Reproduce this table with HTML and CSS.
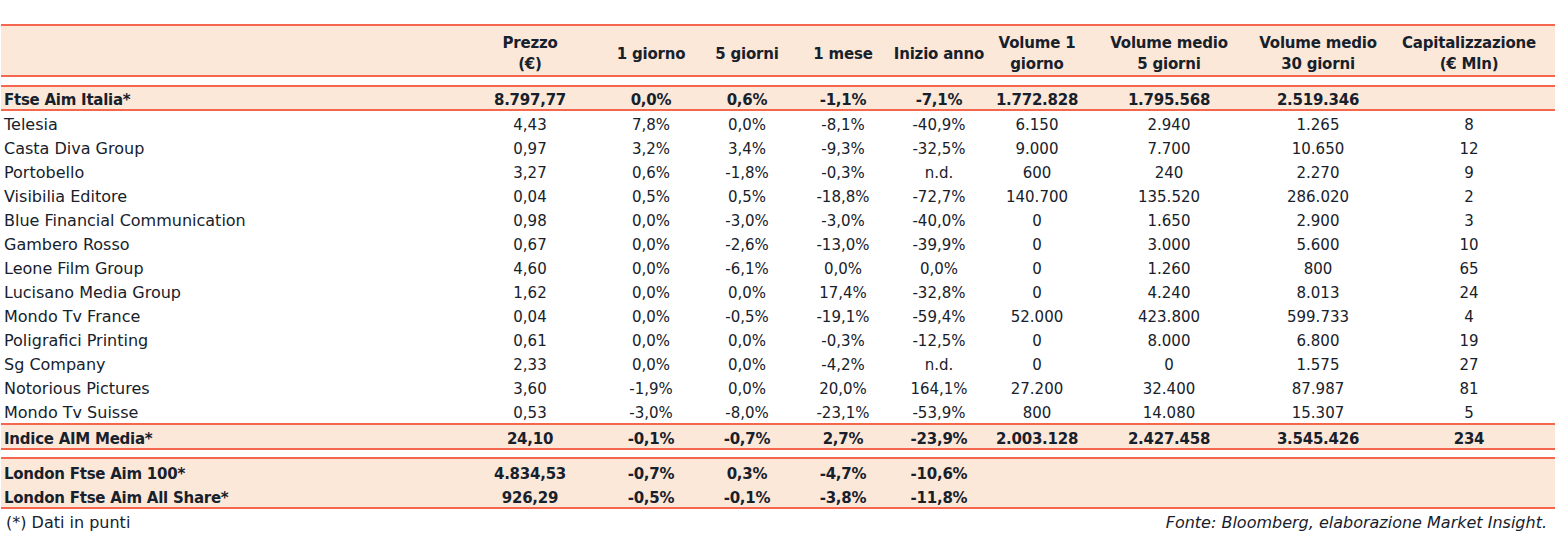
FILE: index.html
```html
<!DOCTYPE html>
<html lang="it">
<head>
<meta charset="utf-8">
<title>AIM Media</title>
<link rel="stylesheet" href="styles.css">
</head>
<body>
<div class="sheet">
  <div class="row head">
    <div class="c name"></div>
    <div class="c">Prezzo<br>(€)</div>
    <div class="c">1 giorno</div>
    <div class="c">5 giorni</div>
    <div class="c">1 mese</div>
    <div class="c">Inizio anno</div>
    <div class="c">Volume 1<br>giorno</div>
    <div class="c">Volume medio<br>5 giorni</div>
    <div class="c">Volume medio<br>30 giorni</div>
    <div class="c">Capitalizzazione<br>(€ Mln)</div>
  </div>

  <div class="row total ftse">
    <div class="c name">Ftse Aim Italia*</div>
    <div class="c">8.797,77</div><div class="c">0,0%</div><div class="c">0,6%</div><div class="c">-1,1%</div><div class="c">-7,1%</div><div class="c">1.772.828</div><div class="c">1.795.568</div><div class="c">2.519.346</div><div class="c"></div>
  </div>

  <div class="row data"><div class="c name">Telesia</div><div class="c">4,43</div><div class="c">7,8%</div><div class="c">0,0%</div><div class="c">-8,1%</div><div class="c">-40,9%</div><div class="c">6.150</div><div class="c">2.940</div><div class="c">1.265</div><div class="c">8</div></div>
  <div class="row data"><div class="c name">Casta Diva Group</div><div class="c">0,97</div><div class="c">3,2%</div><div class="c">3,4%</div><div class="c">-9,3%</div><div class="c">-32,5%</div><div class="c">9.000</div><div class="c">7.700</div><div class="c">10.650</div><div class="c">12</div></div>
  <div class="row data"><div class="c name">Portobello</div><div class="c">3,27</div><div class="c">0,6%</div><div class="c">-1,8%</div><div class="c">-0,3%</div><div class="c">n.d.</div><div class="c">600</div><div class="c">240</div><div class="c">2.270</div><div class="c">9</div></div>
  <div class="row data"><div class="c name">Visibilia Editore</div><div class="c">0,04</div><div class="c">0,5%</div><div class="c">0,5%</div><div class="c">-18,8%</div><div class="c">-72,7%</div><div class="c">140.700</div><div class="c">135.520</div><div class="c">286.020</div><div class="c">2</div></div>
  <div class="row data"><div class="c name">Blue Financial Communication</div><div class="c">0,98</div><div class="c">0,0%</div><div class="c">-3,0%</div><div class="c">-3,0%</div><div class="c">-40,0%</div><div class="c">0</div><div class="c">1.650</div><div class="c">2.900</div><div class="c">3</div></div>
  <div class="row data"><div class="c name">Gambero Rosso</div><div class="c">0,67</div><div class="c">0,0%</div><div class="c">-2,6%</div><div class="c">-13,0%</div><div class="c">-39,9%</div><div class="c">0</div><div class="c">3.000</div><div class="c">5.600</div><div class="c">10</div></div>
  <div class="row data"><div class="c name">Leone Film Group</div><div class="c">4,60</div><div class="c">0,0%</div><div class="c">-6,1%</div><div class="c">0,0%</div><div class="c">0,0%</div><div class="c">0</div><div class="c">1.260</div><div class="c">800</div><div class="c">65</div></div>
  <div class="row data"><div class="c name">Lucisano Media Group</div><div class="c">1,62</div><div class="c">0,0%</div><div class="c">0,0%</div><div class="c">17,4%</div><div class="c">-32,8%</div><div class="c">0</div><div class="c">4.240</div><div class="c">8.013</div><div class="c">24</div></div>
  <div class="row data"><div class="c name">Mondo Tv France</div><div class="c">0,04</div><div class="c">0,0%</div><div class="c">-0,5%</div><div class="c">-19,1%</div><div class="c">-59,4%</div><div class="c">52.000</div><div class="c">423.800</div><div class="c">599.733</div><div class="c">4</div></div>
  <div class="row data"><div class="c name">Poligrafici Printing</div><div class="c">0,61</div><div class="c">0,0%</div><div class="c">0,0%</div><div class="c">-0,3%</div><div class="c">-12,5%</div><div class="c">0</div><div class="c">8.000</div><div class="c">6.800</div><div class="c">19</div></div>
  <div class="row data"><div class="c name">Sg Company</div><div class="c">2,33</div><div class="c">0,0%</div><div class="c">0,0%</div><div class="c">-4,2%</div><div class="c">n.d.</div><div class="c">0</div><div class="c">0</div><div class="c">1.575</div><div class="c">27</div></div>
  <div class="row data"><div class="c name">Notorious Pictures</div><div class="c">3,60</div><div class="c">-1,9%</div><div class="c">0,0%</div><div class="c">20,0%</div><div class="c">164,1%</div><div class="c">27.200</div><div class="c">32.400</div><div class="c">87.987</div><div class="c">81</div></div>
  <div class="row data"><div class="c name">Mondo Tv Suisse</div><div class="c">0,53</div><div class="c">-3,0%</div><div class="c">-8,0%</div><div class="c">-23,1%</div><div class="c">-53,9%</div><div class="c">800</div><div class="c">14.080</div><div class="c">15.307</div><div class="c">5</div></div>

  <div class="row total indice">
    <div class="c name">Indice AIM Media*</div>
    <div class="c">24,10</div><div class="c">-0,1%</div><div class="c">-0,7%</div><div class="c">2,7%</div><div class="c">-23,9%</div><div class="c">2.003.128</div><div class="c">2.427.458</div><div class="c">3.545.426</div><div class="c">234</div>
  </div>

  <div class="london">
    <div class="row lrow">
      <div class="c name">London Ftse Aim 100*</div>
      <div class="c">4.834,53</div><div class="c">-0,7%</div><div class="c">0,3%</div><div class="c">-4,7%</div><div class="c">-10,6%</div><div class="c"></div><div class="c"></div><div class="c"></div><div class="c"></div>
    </div>
    <div class="row lrow">
      <div class="c name">London Ftse Aim All Share*</div>
      <div class="c">926,29</div><div class="c">-0,5%</div><div class="c">-0,1%</div><div class="c">-3,8%</div><div class="c">-11,8%</div><div class="c"></div><div class="c"></div><div class="c"></div><div class="c"></div>
    </div>
  </div>

  <div class="foot">
    <span class="note">(*) Dati in punti</span>
    <span class="source">Fonte: Bloomberg, elaborazione Market Insight.</span>
  </div>
</div>
</body>
</html>
```

FILE: styles.css
```css
html, body {
  margin: 0;
  padding: 0;
  background: #ffffff;
}

body {
  font-family: "DejaVu Sans", "Liberation Sans", sans-serif;
  color: #17212b;
}

.sheet {
  margin: 24px 0 0 1px;
  width: 1554px;
}

.row {
  display: grid;
  grid-template-columns: 454px 150px 92px 100px 92px 100px 96px 168px 130px 172px;
  align-items: end;
}

.c {
  text-align: center;
  white-space: nowrap;
}

.c.name {
  text-align: left;
  padding-left: 3px;
}

/* header */
.head {
  background: #fce8d9;
  border-top: 2px solid #f4674e;
  border-bottom: 2px solid #f4674e;
  height: 42px;
  padding-top: 7px;
  align-items: center;
  font-weight: bold;
  font-size: 15px;
  line-height: 21px;
  letter-spacing: -0.2px;
}

/* bold summary rows */
.total,
.london {
  background: #fce8d9;
  border-top: 2px solid #f4674e;
  border-bottom: 2px solid #f4674e;
}

.total .c,
.lrow .c {
  font-weight: bold;
  font-size: 15px;
  line-height: 18px;
  letter-spacing: -0.25px;
}

.ftse {
  margin-top: 8px;
  height: 22px;
}

.indice {
  height: 23px;
}

.london {
  margin-top: 7px;
}

.lrow {
  height: 24px;
}

/* data rows */
.data {
  height: 24px;
}

.data .c {
  font-size: 15px;
  line-height: 20px;
}

.data .c.name {
  font-size: 16px;
}

/* footer */
.foot {
  display: flex;
  justify-content: space-between;
  height: 23px;
  padding: 2px 8px 0 5px;
  font-size: 16px;
  line-height: 24px;
}

.source {
  font-style: italic;
}
```
